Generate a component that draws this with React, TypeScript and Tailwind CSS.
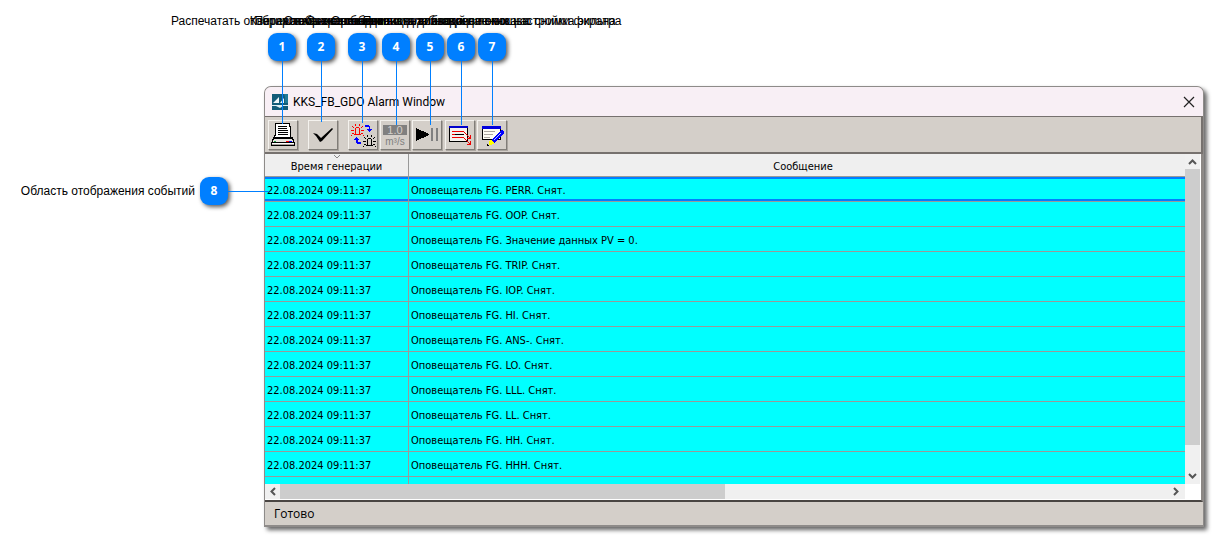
import type { ReactNode } from "react"

const events = [
  "Оповещатель FG. PERR. Снят.",
  "Оповещатель FG. OOP. Снят.",
  "Оповещатель FG. Значение данных PV = 0.",
  "Оповещатель FG. TRIP. Снят.",
  "Оповещатель FG. IOP. Снят.",
  "Оповещатель FG. HI. Снят.",
  "Оповещатель FG. ANS-. Снят.",
  "Оповещатель FG. LO. Снят.",
  "Оповещатель FG. LLL. Снят.",
  "Оповещатель FG. LL. Снят.",
  "Оповещатель FG. HH. Снят.",
  "Оповещатель FG. HHH. Снят.",
]

// x is the centre of the pin, line is the length of its leader
const callouts = [
  { x: 282, line: 63, text: "Распечатать отображаемые сообщения" },
  { x: 321, line: 61, text: "Квитировать все события" },
  { x: 362, line: 62, text: "Переключение режимов сигнализации" },
  { x: 396, line: 64, text: "Отображение единиц для ввода данных" },
  { x: 430, line: 64, text: "Остановка и возобновление показа" },
  { x: 461, line: 64, text: "Сохранение списка событий с помощью снимка экрана" },
  { x: 492, line: 64, text: "Показать диалоговое окно настройки фильтра" },
]

function Badge({ n }: { n: number }) {
  return (
    <span className="flex h-7 w-7 shrink-0 items-center justify-center rounded-[9px] bg-[#007fff] font-['Open_Sans',sans-serif] text-xs font-bold text-white shadow-[2px_2px_4px_rgba(0,0,0,0.65)]">
      {n}
    </span>
  )
}

function Callout({ n, x, line, text }: { n: number; x: number; line: number; text: string }) {
  return (
    <div className="absolute top-[13px] flex w-0 flex-col items-center" style={{ left: x }}>
      <span className="mb-1 text-xs leading-4 whitespace-nowrap">{text}</span>
      <Badge n={n} />
      <span className="w-px shrink-0 bg-[#007fff]" style={{ height: line }} />
    </div>
  )
}

function ToolButton({ label, className = "", children }: { label: string; className?: string; children: ReactNode }) {
  return (
    <button
      aria-label={label}
      className={`h-[30px] w-[30px] shrink-0 border border-t-[#f4f2ee] border-l-[#f4f2ee] border-r-[#807d78] border-b-[#807d78] bg-[#d4cfc9] shadow-[1px_1px_0_#aaa59f] ${className}`}
    >
      <svg viewBox="0 0 28 28" className="h-7 w-7" shapeRendering="crispEdges">
        {children}
      </svg>
    </button>
  )
}

function PrintIcon() {
  return (
    <>
      <path d="M6 2H21V5H22V17H5V14H6Z" fill="#000" />
      <path d="M7 3H20V6H21V16H6V15H7Z" fill="#fff" />
      <path d="M9 5.5H18M9 7.5H18M9 9.5H19M9 11.5H19M9 13.5H19" stroke="#000" />
      <path d="M4 16H5V17H22V16H24V18H25V21H26V25H2V21H3V18H4Z" fill="#000" />
      <path d="M5 18H23V19H5ZM4 19H24V21H4Z" fill="#e7e4df" />
      <path d="M3 22H25V23H3Z" fill="#fff" />
      <path d="M3 23H25V24H3Z" fill="#aaa59f" />
      <path d="M5 20H7V21H5Z" fill="#22a04a" />
      <path d="M17 20H20V21H17Z" fill="#f00" />
      <path d="M20 20H23V21H20Z" fill="#00f" />
    </>
  )
}

function CheckIcon() {
  return <path d="M4 12L8 13L12 17L23 7L24 8L13 20L11 21L7 15Z" fill="#000" shapeRendering="auto" />
}

// lamp body with rays around it
function Lamp({ x, y, color }: { x: number; y: number; color: string }) {
  return (
    <g transform={`translate(${x} ${y})`} fill={color}>
      <path d="M5 3H8V4H9V10H10V11H3V10H4V4H5ZM5 4V10H8V4Z" fillRule="evenodd" />
      <path d="M4 0H5V2H4ZM8 0H9V2H8ZM1 2H2V3H3V4H2V3H1ZM11 2H12V3H11V4H10V3H11ZM0 6H3V7H0ZM10 6H13V7H10ZM1 9H3V10H1ZM0 11H1V12H0ZM10 9H12V10H10ZM12 11H13V12H12Z" />
    </g>
  )
}

function LampsIcon() {
  return (
    <>
      <Lamp x={2} y={3} color="#f00" />
      <Lamp x={14} y={14} color="#000" />
      <path d="M16 4H20V5H21V8H23V9H22V10H21V11H20V10H19V9H18V8H20V6H16Z" fill="#00f" />
      <path d="M12 23H8V22H7V19H5V18H6V17H7V16H8V17H9V18H10V19H9V21H12Z" fill="#00f" />
    </>
  )
}

function UnitsIcon() {
  return (
    <>
      <path d="M2 4H26V14H2Z" fill="#808080" />
      <text x="14" y="13" textAnchor="middle" fontSize="11" fill="#d4cfc9" className="font-['Liberation_Sans',sans-serif]">
        1.0
      </text>
      <text x="14" y="24" textAnchor="middle" fontSize="10" fill="#808080" className="font-['Liberation_Sans',sans-serif]">
        m³/s
      </text>
    </>
  )
}

function PlayPauseIcon() {
  return (
    <>
      <path d="M3 7L16 13V14L3 20Z" fill="#000" />
      <path d="M18 7H20V20H18ZM23 7H25V20H23Z" fill="#808080" />
    </>
  )
}

function ListIcon() {
  return (
    <>
      <path d="M3 5H22V21H3Z" fill="#000" />
      <path d="M4 7H21V20H4Z" fill="#f4f2ee" />
      <path d="M3 5H22V7H3Z" fill="#00c" />
      <path d="M9 13.5H18" stroke="#000" />
      <path d="M6 10.5H18M6 13.5H9M6 16.5H18" stroke="#e00" />
      <path
        d="M18 11H19V12H20V13H21V14H22V15H23V16H24V14H25V18H21V17H23V16H22V15H21V14H20V13H19V12H18ZM18 17H19V18H20V19H21V20H22V21H23V22H24V20H25V24H21V23H23V22H22V21H21V20H20V19H19V18H18Z"
        fill="#e00"
      />
    </>
  )
}

function FilterIcon() {
  return (
    <>
      <path d="M4 5H23V19H4Z" fill="#000" />
      <path d="M5 8H22V18H5Z" fill="#fffdf4" />
      <path d="M4 5H23V8H4Z" fill="#00d" />
      <path d="M6 10.5H17M6 13.5H15M6 16.5H12" stroke="#aaa59f" />
      <path d="M23 9H24L26 11V12L16 22L13 19Z" fill="#00f" />
      <path d="M23 12L16 19" stroke="#b9c9ff" />
      <path d="M12 19H13L16 22V23L12 24H11V21Z" fill="#ff0" />
      <path d="M9 23H10V24H11V25H9Z" fill="#000" />
    </>
  )
}

function Chevron({ d }: { d: string }) {
  return (
    <svg viewBox="0 0 15 15" className="h-[15px] w-[15px]" fill="none" stroke="#555" strokeWidth="2">
      <path d={d} />
    </svg>
  )
}

export default function App() {
  return (
    <div className="relative bg-white font-['Liberation_Sans',Arial,sans-serif] text-black">
      <div className="flex pt-[86px] pr-[10px] pb-2">
        <aside className="flex w-[264px] shrink-0 items-center self-start pt-[91px]">
          <span className="w-[200px] pr-[5px] text-right text-xs whitespace-nowrap">Область отображения событий</span>
          <Badge n={8} />
        </aside>

        <main className="min-w-0 flex-1 rounded-t-[7px] border border-[#8e8b89] border-b-2 bg-[#d4cfc9] shadow-[3px_3px_4px_rgba(0,0,0,0.6)]">
          <header className="flex h-[29px] items-center rounded-t-[6px] bg-[#f8eff5] pr-2 pl-[7px]">
            <svg viewBox="0 0 16 16" className="h-4 w-4">
              <path d="M0 0H16V16H0Z" fill="#125d79" />
              <path d="M1 9L7 3V9ZM8 9L12 4V9Z" fill="#eef7fa" />
              <path d="M12 0H16V9H13V3Z" fill="#1e7b98" />
              <path d="M0 11H16V12H11L8 14L4 12H0Z" fill="#dff0f5" />
            </svg>
            <h1 className="ml-[5px] font-[Roboto,sans-serif] text-xs">KKS_FB_GDO Alarm Window</h1>
            <button aria-label="Закрыть" className="ml-auto">
              <svg viewBox="0 0 12 12" className="h-3 w-3" stroke="#222" strokeWidth="1.2">
                <path d="M1 1L11 11M11 1L1 11" />
              </svg>
            </button>
          </header>

          <div className="flex h-[38px] items-center border-t border-r-2 border-b-2 border-[#76716e] pl-[3px]">
            <ToolButton label="Печать"><PrintIcon /></ToolButton>
            <ToolButton label="Квитировать" className="ml-[10px]"><CheckIcon /></ToolButton>
            <ToolButton label="Переключить" className="ml-[10px]"><LampsIcon /></ToolButton>
            <ToolButton label="Единицы" className="ml-[2px]"><UnitsIcon /></ToolButton>
            <ToolButton label="Пуск и пауза" className="ml-[2px]"><PlayPauseIcon /></ToolButton>
            <ToolButton label="Список" className="ml-[3px]"><ListIcon /></ToolButton>
            <ToolButton label="Фильтр" className="ml-[2px]"><FilterIcon /></ToolButton>
          </div>

          <div className="flex border-r-2 border-b-2 border-r-[#8b8784] border-b-[#494542] bg-white pr-px pb-px">
            <div className="min-w-0 flex-1">
              <table className="w-full table-fixed border-separate border-spacing-0 bg-[#00ffff] font-['DejaVu_Sans_Condensed','DejaVu_Sans',sans-serif] text-[11px] leading-4">
                <thead>
                  <tr className="h-[23px] bg-[#efefef]">
                    <th className="w-[144px] border-r border-b border-[#999] p-0 font-normal">
                      <svg viewBox="0 0 8 4" className="mx-auto h-1 w-2" fill="none" stroke="#888">
                        <path d="M1 0L4 3L7 0" />
                      </svg>
                      Время генерации
                    </th>
                    <th className="border-b border-[#999] p-0 pt-1 pl-3 font-normal">Сообщение</th>
                  </tr>
                </thead>
                <tbody>
                  {events.map((text, i) => (
                    <tr key={text} className="h-[25px]">
                      <td className="border-r border-b border-[#999] p-0">
                        <div className={`h-6 pl-0.5 ${i === 0 ? "border-y-2 border-[#007fff] pt-1" : "pt-1.5"}`}>
                          22.08.2024 09:11:37
                        </div>
                      </td>
                      <td className="border-b border-[#999] p-0">
                        <div className={`h-6 pl-0.5 ${i === 0 ? "border-y-2 border-[#007fff] pt-1" : "pt-1.5"}`}>{text}</div>
                      </td>
                    </tr>
                  ))}
                  <tr className="h-[7px]">
                    <td className="border-r border-[#999] p-0" />
                    <td className="p-0" />
                  </tr>
                </tbody>
              </table>

              <div className="flex h-[15px] bg-[#f0f0f0]">
                <button aria-label="Влево"><Chevron d="M10 4L6.500 7.500L10 11" /></button>
                <div className="flex-1">
                  <div className="h-full w-1/2 bg-[#cdcdcd]" />
                </div>
                <button aria-label="Вправо"><Chevron d="M4 4L7.500 7.500L4 11" /></button>
              </div>
            </div>

            <div className="mb-[15px] flex w-[15px] flex-col bg-[#f0f0f0]">
              <button aria-label="Вверх"><Chevron d="M4 10L7.500 6.500L11 10" /></button>
              <div className="flex-1">
                <div className="h-[92%] bg-[#cdcdcd]" />
              </div>
              <button aria-label="Вниз"><Chevron d="M4 5L7.500 8.500L11 5" /></button>
            </div>
          </div>

          <footer className="h-[23px] pl-[9px] font-['Open_Sans',sans-serif] text-xs leading-6">Готово</footer>
        </main>
      </div>

      {callouts.map((c, i) => (
        <Callout key={c.x} n={i + 1} x={c.x} line={c.line} text={c.text} />
      ))}
      <span className="absolute top-[191px] left-[228px] h-px w-[41px] bg-[#007fff]" />
    </div>
  )
}
